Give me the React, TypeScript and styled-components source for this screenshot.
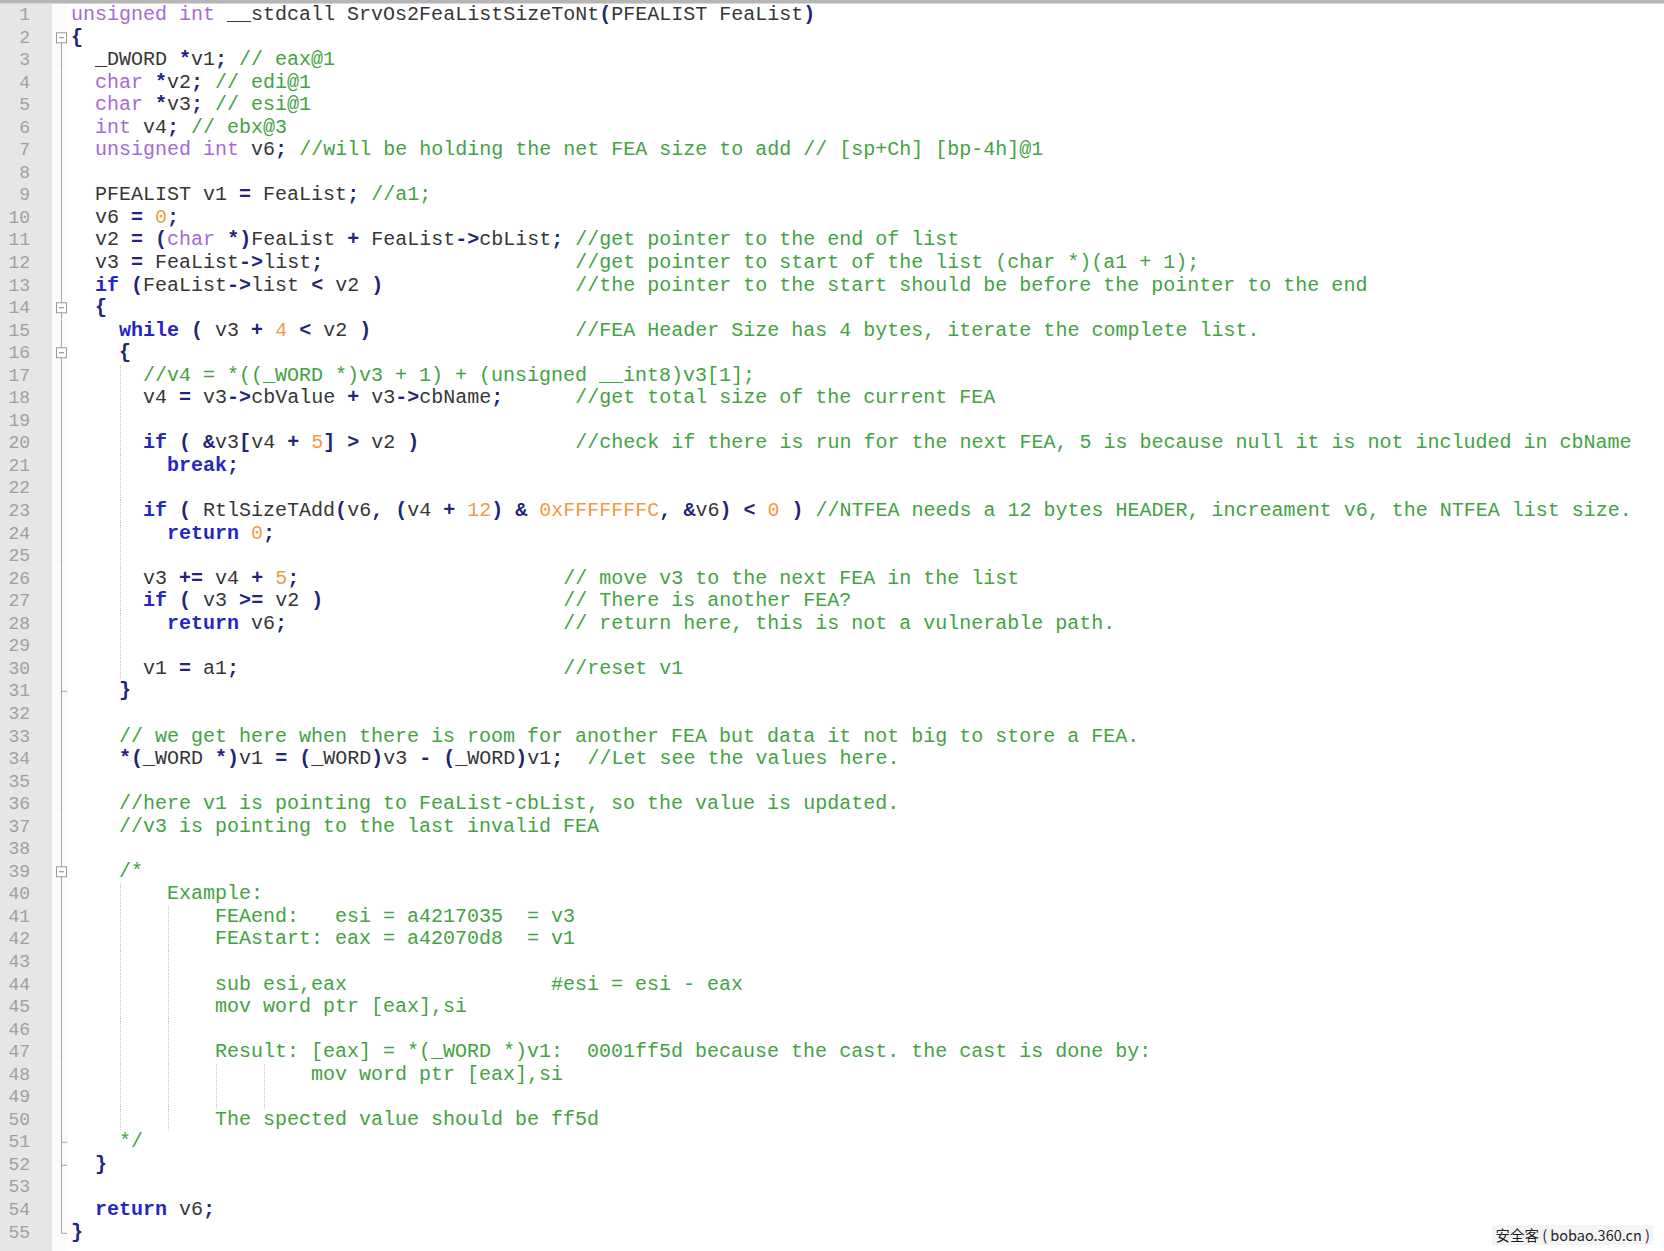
import styled, { createGlobalStyle } from 'styled-components'

const LINE_H = 22.55
const CHAR_W = 12

const GlobalStyle = createGlobalStyle`
  html, body {
    margin: 0;
    padding: 0;
    background: #ffffff;
  }
  body {
    font-family: "Liberation Mono", "Courier New", monospace;
  }
`

const COLORS = {
  text: '#363636',
  type: '#a56ad8',
  keyword: '#2626c4',
  number: '#f29a44',
  operator: '#23237c',
  comment: '#43a243',
  gutter: '#e6e6e6',
  lineNo: '#a0a0a0',
  fold: '#a6a6a6',
  guide: '#c4c4c4',
}

// pad a code part so the trailing comment starts at a fixed column
const at = (code: string, col: number, comment: string) =>
  code + ' '.repeat(Math.max(1, col - code.length)) + comment

const SOURCE: string[] = [
  'unsigned int __stdcall SrvOs2FeaListSizeToNt(PFEALIST FeaList)',
  '{',
  '  _DWORD *v1; // eax@1',
  '  char *v2; // edi@1',
  '  char *v3; // esi@1',
  '  int v4; // ebx@3',
  '  unsigned int v6; //will be holding the net FEA size to add // [sp+Ch] [bp-4h]@1',
  '',
  '  PFEALIST v1 = FeaList; //a1;',
  '  v6 = 0;',
  at('  v2 = (char *)FeaList + FeaList->cbList;', 42, '//get pointer to the end of list'),
  at('  v3 = FeaList->list;', 42, '//get pointer to start of the list (char *)(a1 + 1);'),
  at('  if (FeaList->list < v2 )', 42, '//the pointer to the start should be before the pointer to the end'),
  '  {',
  at('    while ( v3 + 4 < v2 )', 42, '//FEA Header Size has 4 bytes, iterate the complete list.'),
  '    {',
  '      //v4 = *((_WORD *)v3 + 1) + (unsigned __int8)v3[1];',
  at('      v4 = v3->cbValue + v3->cbName;', 42, '//get total size of the current FEA'),
  '',
  at('      if ( &v3[v4 + 5] > v2 )', 42, '//check if there is run for the next FEA, 5 is because null it is not included in cbName'),
  '        break;',
  '',
  '      if ( RtlSizeTAdd(v6, (v4 + 12) & 0xFFFFFFFC, &v6) < 0 ) //NTFEA needs a 12 bytes HEADER, increament v6, the NTFEA list size.',
  '        return 0;',
  '',
  at('      v3 += v4 + 5;', 41, '// move v3 to the next FEA in the list'),
  at('      if ( v3 >= v2 )', 41, '// There is another FEA?'),
  at('        return v6;', 41, '// return here, this is not a vulnerable path.'),
  '',
  at('      v1 = a1;', 41, '//reset v1'),
  '    }',
  '',
  '    // we get here when there is room for another FEA but data it not big to store a FEA.',
  '    *(_WORD *)v1 = (_WORD)v3 - (_WORD)v1;  //Let see the values here.',
  '',
  '    //here v1 is pointing to FeaList-cbList, so the value is updated.',
  '    //v3 is pointing to the last invalid FEA',
  '',
  '    /*',
  '        Example:',
  '            FEAend:   esi = a4217035  = v3',
  '            FEAstart: eax = a42070d8  = v1',
  '',
  at('            sub esi,eax', 40, '#esi = esi - eax'),
  '            mov word ptr [eax],si',
  '',
  '            Result: [eax] = *(_WORD *)v1:  0001ff5d because the cast. the cast is done by:',
  '                    mov word ptr [eax],si',
  '',
  '            The spected value should be ff5d',
  '    */',
  '  }',
  '',
  '  return v6;',
  '}',
]

type TokKind = 'plain' | 'type' | 'keyword' | 'number' | 'operator' | 'comment' | 'space'
type Tok = { kind: TokKind; text: string }

const TYPES = new Set(['unsigned', 'int', 'char'])
const KEYWORDS = new Set(['if', 'while', 'break', 'return'])

function tokenize(lines: string[]): Tok[][] {
  let inBlock = false
  return lines.map((line) => {
    const toks: Tok[] = []
    let i = 0
    while (i < line.length) {
      if (inBlock) {
        const end = line.indexOf('*/', i)
        if (end < 0) {
          toks.push({ kind: 'comment', text: line.slice(i) })
          i = line.length
        } else {
          toks.push({ kind: 'comment', text: line.slice(i, end + 2) })
          i = end + 2
          inBlock = false
        }
        continue
      }
      const rest = line.slice(i)
      if (rest.startsWith('//')) {
        toks.push({ kind: 'comment', text: rest })
        break
      }
      if (rest.startsWith('/*')) {
        inBlock = true
        toks.push({ kind: 'comment', text: '/*' })
        i += 2
        continue
      }
      let m: RegExpExecArray | null
      if ((m = /^\s+/.exec(rest))) {
        toks.push({ kind: 'space', text: m[0] })
      } else if ((m = /^(0x[0-9A-Fa-f]+|\d+)/.exec(rest))) {
        toks.push({ kind: 'number', text: m[0] })
      } else if ((m = /^[A-Za-z_]\w*/.exec(rest))) {
        const w = m[0]
        toks.push({ kind: TYPES.has(w) ? 'type' : KEYWORDS.has(w) ? 'keyword' : 'plain', text: w })
      } else {
        m = /^./.exec(rest)!
        toks.push({ kind: 'operator', text: m[0] })
      }
      i += m[0].length
    }
    return toks
  })
}

type FoldMark = 'none' | 'head' | 'box' | 'line' | 'tick' | 'end'

function foldFor(n: number): FoldMark {
  if (n === 1 || n > 55) return 'none'
  if (n === 2) return 'head'
  if (n === 14 || n === 16 || n === 39) return 'box'
  if (n === 31 || n === 51 || n === 52) return 'tick'
  if (n === 55) return 'end'
  return 'line'
}

function guidesFor(n: number): number[] {
  if (n >= 17 && n <= 30) return [4]
  if (n === 40) return [4]
  if (n === 48 || n === 49) return [4, 8, 12, 16]
  if (n >= 41 && n <= 50) return [4, 8]
  return []
}

// dotted indent guides painted as background layers, one per indent column
const guideBackground = (cols: number[]) =>
  cols.length === 0
    ? 'none'
    : cols
        .map(
          (c) =>
            `linear-gradient(${COLORS.guide} 50%, transparent 50%) ${4 + c * CHAR_W}px 0 / 1px 2px repeat-y`
        )
        .join(', ')

const Editor = styled.div`
  position: relative;
  height: 1251px;
  overflow: hidden;
  border-top: 3px solid #b6b6b6;
  box-shadow: inset 0 1px 0 #d8d8d8;
  background: #ffffff;
`

const Lines = styled.div`
  display: flex;
  flex-direction: column;
  padding-top: 1px;
`

const Row = styled.div`
  display: flex;
  height: ${LINE_H}px;
  flex: none;
`

const LineNo = styled.div`
  flex: none;
  width: 52px;
  box-sizing: border-box;
  padding-right: 22px;
  background: ${COLORS.gutter};
  color: ${COLORS.lineNo};
  font: 18px/${LINE_H}px "Liberation Mono", "Courier New", monospace;
  text-align: right;
`

const FoldCell = styled.svg`
  flex: none;
  display: block;
  width: 16px;
  height: ${LINE_H}px;
  background: #fbfbfb;
`

const Code = styled.pre<{ $guides: number[] }>`
  flex: 1;
  margin: 0;
  padding-left: 3px;
  font: 20px/${LINE_H}px "Liberation Mono", "Courier New", monospace;
  white-space: pre;
  color: ${COLORS.text};
  background: ${(p) => guideBackground(p.$guides)};
`

const Token = styled.span<{ $kind: TokKind }>`
  color: ${(p) =>
    p.$kind === 'type'
      ? COLORS.type
      : p.$kind === 'keyword'
      ? COLORS.keyword
      : p.$kind === 'number'
      ? COLORS.number
      : p.$kind === 'operator'
      ? COLORS.operator
      : p.$kind === 'comment'
      ? COLORS.comment
      : COLORS.text};
  font-weight: ${(p) => (p.$kind === 'keyword' || p.$kind === 'operator' ? 700 : 400)};
`

const Watermark = styled.div`
  position: absolute;
  right: 11px;
  bottom: 9px;
  padding: 1px 3px;
  background: rgba(242, 242, 242, 0.85);
  color: #1e1e1e;
  font: 14.5px/18px "Noto Sans CJK SC", "Liberation Sans", sans-serif;
  text-shadow: 0 0 2px #ffffff;
`

const Fold = ({ mark }: { mark: FoldMark }) => {
  const mid = LINE_H / 2
  const x = 9.5
  return (
    <FoldCell viewBox={`0 0 16 ${LINE_H}`} preserveAspectRatio="none">
      {mark === 'head' && <line x1={x} y1={mid} x2={x} y2={LINE_H} stroke={COLORS.fold} />}
      {(mark === 'box' || mark === 'line' || mark === 'tick') && (
        <line x1={x} y1={0} x2={x} y2={LINE_H} stroke={COLORS.fold} />
      )}
      {mark === 'end' && <line x1={x} y1={0} x2={x} y2={mid} stroke={COLORS.fold} />}
      {(mark === 'tick' || mark === 'end') && <line x1={x} y1={mid} x2={15} y2={mid} stroke={COLORS.fold} />}
      {(mark === 'head' || mark === 'box') && (
        <>
          <rect x={4.5} y={mid - 5.5} width={10} height={10} fill="#ffffff" stroke="#9a9a9a" />
          <line x1={7} y1={mid - 0.5} x2={12} y2={mid - 0.5} stroke="#808080" />
        </>
      )}
    </FoldCell>
  )
}

export default function App() {
  const tokens = tokenize(SOURCE)
  return (
    <>
      <GlobalStyle />
      <Editor>
        <Lines>
          {tokens.map((toks, idx) => {
            const n = idx + 1
            return (
              <Row key={n}>
                <LineNo>{n}</LineNo>
                <Fold mark={foldFor(n)} />
                <Code $guides={guidesFor(n)}>
                  {toks.length === 0 ? ' ' : toks.map((t, i) => <Token key={i} $kind={t.kind}>{t.text}</Token>)}
                </Code>
              </Row>
            )
          })}
          <Row>
            <LineNo />
            <Fold mark="none" />
            <Code $guides={[]}> </Code>
          </Row>
        </Lines>
        <Watermark>安全客 ( bobao.360.cn )</Watermark>
      </Editor>
    </>
  )
}
